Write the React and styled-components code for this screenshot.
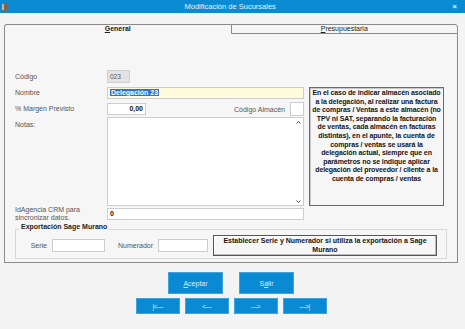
import styled, { createGlobalStyle } from "styled-components";

const GlobalStyle = createGlobalStyle`
  html, body {
    margin: 0;
    padding: 0;
    background: #f4f4f4;
  }
  body {
    font-family: "Liberation Sans", Arial, sans-serif;
    font-size: 7px;
    color: #555;
  }
  * {
    box-sizing: border-box;
  }
`;

const Window = styled.div`
  width: 465px;
  height: 329px;
  display: flex;
  flex-direction: column;
  background: #f4f4f4;
  overflow: hidden;
`;

const TitleBar = styled.div`
  height: 13px;
  background: #0a8ad2;
  display: flex;
  align-items: center;
  padding: 0 8px 0 1px;
`;

const TitleText = styled.div`
  flex: 1;
  text-align: center;
  font-size: 7.5px;
  color: #e8f3fb;
`;

const CloseButton = styled.span`
  font-size: 8px;
  font-weight: bold;
  color: #e8f3fb;
  line-height: 1;
`;

const Frame = styled.div`
  margin: 11px 7px 0 4px;
  height: 239px;
  display: flex;
  flex-direction: column;
`;

const Tabs = styled.div`
  display: flex;
  height: 10px;
`;

const Tab = styled.div`
  flex: 1;
  border: 1px solid #8a8a8a;
  border-bottom: ${(p) => (p.$active ? "none" : "1px solid #8a8a8a")};
  border-radius: ${(p) => (p.$active ? "3px 0 0 0" : "0 3px 0 0")};
  margin-left: ${(p) => (p.$active ? "0" : "-1px")};
  text-align: center;
  line-height: 8px;
  font-weight: ${(p) => (p.$active ? "bold" : "normal")};
  color: #222;
  background: #f6f6f6;

  u {
    text-decoration: underline;
  }
`;

const Panel = styled.div`
  flex: 1;
  border: 1px solid #8a8a8a;
  border-top: none;
  padding: 36px 10px 0 10px;
  background: #f6f6f6;
`;

const Row = styled.div`
  display: flex;
  align-items: ${(p) => p.$align || "center"};
  height: ${(p) => p.$h}px;
  margin-top: ${(p) => p.$mt || 0}px;
`;

const Label = styled.div`
  width: 92px;
  flex-shrink: 0;
  color: #555;
  line-height: 8px;
  padding-top: ${(p) => p.$pt || 0}px;
`;

const ReadOnlyBox = styled.div`
  width: 23px;
  height: 13px;
  background: #e3e3e3;
  border: 1px solid #cfcfcf;
  font-size: 6.5px;
  line-height: 11px;
  padding-left: 2px;
  color: #555;
`;

const Input = styled.div`
  width: ${(p) => p.$w}px;
  height: ${(p) => p.$h || 12}px;
  background: ${(p) => p.$bg || "#ffffff"};
  border: 1px solid #cdcdcd;
  font-weight: ${(p) => (p.$bold ? "bold" : "normal")};
  text-align: ${(p) => p.$align || "left"};
  color: #111;
  line-height: ${(p) => (p.$h || 12) - 2}px;
  padding: 0 2px;
  flex-shrink: 0;
`;

const Selected = styled.span`
  background: #2e6fd8;
  color: #fff;
  font-weight: bold;
  padding: 0 1px;
`;

const Main = styled.div`
  display: flex;
  gap: 5px;
  margin-top: 4px;
`;

const LeftCol = styled.div`
  width: 289px;
  display: flex;
  flex-direction: column;
`;

const InlineLabel = styled.div`
  margin-left: auto;
  margin-right: 5px;
  color: #555;
`;

const TextArea = styled.div`
  width: 197px;
  height: 89px;
  background: #fff;
  border: 1px solid #cdcdcd;
  display: flex;
  justify-content: flex-end;
`;

const ScrollCol = styled.div`
  width: 9px;
  display: flex;
  flex-direction: column;
  justify-content: space-between;
  align-items: center;
  padding: 3px 0 2px;
`;

const InfoBox = styled.div`
  width: 135px;
  border: 1px solid #6a6a6a;
  box-shadow: inset 1px 1px 0 #c8c8c8;
  font-weight: bold;
  color: #151515;
  text-align: center;
  line-height: 8.6px;
  padding-top: 1px;
  letter-spacing: -0.1px;

  span {
    display: block;
    white-space: nowrap;
  }
`;

const Group = styled.fieldset`
  margin: 3px 0 0 0;
  padding: 0 0 2px 0;
  border: 1px solid #d8d8d8;
  width: 432px;
  display: flex;
  align-items: center;
`;

const Legend = styled.legend`
  margin-left: 3px;
  padding: 0 2px 5px;
  font-weight: bold;
  color: #222;
  font-size: 7px;
  line-height: 7px;
`;

const GroupLabel = styled.div`
  width: ${(p) => p.$w}px;
  text-align: right;
  padding-right: 5px;
  color: #555;
  flex-shrink: 0;
`;

const NoteBox = styled.div`
  width: 224px;
  height: 21px;
  margin-left: 5px;
  border: 1px solid #555;
  box-shadow: inset -1px -1px 0 #bdbdbd, inset 1px 1px 0 #fff;
  font-weight: bold;
  color: #151515;
  text-align: center;
  line-height: 8.5px;
  padding-top: 1px;
`;

const ButtonArea = styled.div`
  display: flex;
  flex-direction: column;
  align-items: center;
  gap: 4px;
  margin-top: 9px;
  padding-right: 3px;
`;

const ButtonRow = styled.div`
  display: flex;
  gap: ${(p) => p.$gap}px;
`;

const Button = styled.button`
  width: ${(p) => p.$w}px;
  height: ${(p) => p.$h}px;
  background: #0a8ad2;
  border: 1px solid #3ea2dd;
  color: #dcedf9;
  font-family: "Liberation Sans", Arial, sans-serif;
  font-size: 7px;
  padding: 0;
  cursor: pointer;
`;

const NavButton = styled(Button)`
  font-size: 6.5px;
  letter-spacing: -0.6px;
`;

const AppIcon = () => (
  <svg width="7" height="8" viewBox="0 0 7 8">
    <rect x="0" y="0" width="7" height="8" fill="#7a6a5c" />
    <rect x="1" y="1" width="2" height="6" fill="#c8b8a0" />
    <rect x="4" y="1" width="2" height="6" fill="#a05030" />
  </svg>
);

const Chevron = ({ up }) => (
  <svg width="5" height="3" viewBox="0 0 5 3">
    <path
      d={up ? "M0.5 2.5 L2.5 0.5 L4.5 2.5" : "M0.5 0.5 L2.5 2.5 L4.5 0.5"}
      fill="none"
      stroke="#444"
      strokeWidth="1"
    />
  </svg>
);

const infoLines = [
  "En el caso de indicar almacén asociado",
  "a la delegación, al realizar una factura",
  "de compras / Ventas a este almacén (no",
  "TPV ni SAT, separando la facturación",
  "de ventas, cada almacén en facturas",
  "distintas), en el apunte, la cuenta de",
  "compras / ventas se usará la",
  "delegación actual, siempre que en",
  "parámetros no se indique aplicar",
  "delegación del proveedor / cliente a la",
  "cuenta de compras / ventas",
];

export default function App() {
  return (
    <>
      <GlobalStyle />
      <Window>
        <TitleBar>
          <AppIcon />
          <TitleText>Modificación de Sucursales</TitleText>
          <CloseButton>×</CloseButton>
        </TitleBar>

        <Frame>
          <Tabs>
            <Tab $active>
              <u>G</u>eneral
            </Tab>
            <Tab>
              <u>P</u>resupuestaria
            </Tab>
          </Tabs>

          <Panel>
            <Row $h={13}>
              <Label>Código</Label>
              <ReadOnlyBox>023</ReadOnlyBox>
            </Row>

            <Main>
              <LeftCol>
                <Row $h={12}>
                  <Label>Nombre</Label>
                  <Input $w={197} $bg="#fffbdc">
                    <Selected>Delegación 23</Selected>
                  </Input>
                </Row>
                <Row $h={14} $mt={3}>
                  <Label>% Margen Previsto</Label>
                  <Input $w={39} $bold $align="right">
                    0,00
                  </Input>
                  <InlineLabel>Código Almacén</InlineLabel>
                  <Input $w={14} $h={14} />
                </Row>
                <Row $h={89} $mt={1} $align="flex-start">
                  <Label $pt={4}>Notas:</Label>
                  <TextArea>
                    <ScrollCol>
                      <Chevron up />
                      <Chevron />
                    </ScrollCol>
                  </TextArea>
                </Row>
              </LeftCol>
              <InfoBox>
                {infoLines.map((l) => (
                  <span key={l}>{l}</span>
                ))}
              </InfoBox>
            </Main>

            <Row $h={12} $mt={2}>
              <Label>
                IdAgencia CRM para
                <br />
                sincronizar datos.
              </Label>
              <Input $w={197} $bold>
                0
              </Input>
            </Row>

            <Group>
              <Legend>Exportación Sage Murano</Legend>
              <GroupLabel $w={36}>Serie</GroupLabel>
              <Input $w={53} $h={13} />
              <GroupLabel $w={53}>Numerador</GroupLabel>
              <Input $w={50} $h={13} />
              <NoteBox>
                Establecer Serie y Numerador si utiliza la exportación a Sage
                <br />
                Murano
              </NoteBox>
            </Group>
          </Panel>
        </Frame>

        <ButtonArea>
          <ButtonRow $gap={16}>
            <Button $w={55} $h={22}>
              <u>A</u>ceptar
            </Button>
            <Button $w={55} $h={22}>
              S<u>a</u>lir
            </Button>
          </ButtonRow>
          <ButtonRow $gap={5}>
            <NavButton $w={44} $h={16}>|&lt;—</NavButton>
            <NavButton $w={44} $h={16}>&lt;—</NavButton>
            <NavButton $w={44} $h={16}>—&gt;</NavButton>
            <NavButton $w={44} $h={16}>—&gt;|</NavButton>
          </ButtonRow>
        </ButtonArea>
      </Window>
    </>
  );
}
